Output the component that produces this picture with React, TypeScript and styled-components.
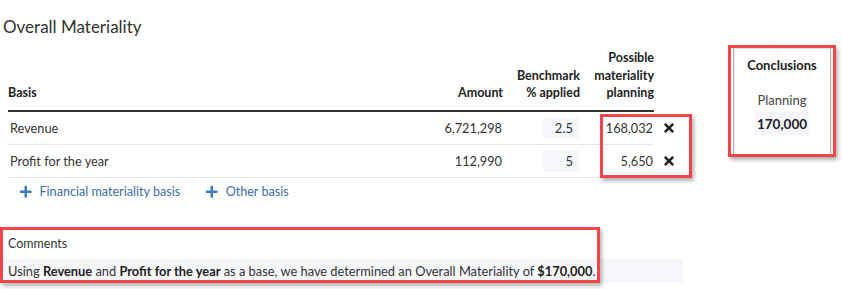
import styled, { createGlobalStyle } from 'styled-components';
import { FaPlus, FaTimes } from 'react-icons/fa';

type BasisRow = {
  id: string;
  name: string;
  amount: string;
  percent: string;
  possible: string;
};

const rows: BasisRow[] = [
  { id: 'revenue', name: 'Revenue', amount: '6,721,298', percent: '2.5', possible: '168,032' },
  { id: 'profit', name: 'Profit for the year', amount: '112,990', percent: '5', possible: '5,650' },
];

const GlobalStyle = createGlobalStyle`
  html, body {
    margin: 0;
    padding: 0;
    background: #ffffff;
  }

  body {
    font-family: Lato, 'Open Sans', 'Liberation Sans', sans-serif;
    color: #333333;
  }
`;

const App = () => {
  return (
    <>
      <GlobalStyle />
      <Page>
        <MainColumn>
          <Title>Overall Materiality</Title>

          <Table>
            <HeaderRow>
              <HeaderCell>Basis</HeaderCell>
              <HeaderCell $align="right">Amount</HeaderCell>
              <HeaderCell $align="right">
                Benchmark
                <br />% applied
              </HeaderCell>
              <HeaderCell $align="right">
                Possible
                <br />
                materiality
                <br />
                planning
              </HeaderCell>
            </HeaderRow>

            {rows.map((row) => (
              <RowWrapper key={row.id}>
                <BodyRow>
                  <Cell>{row.name}</Cell>
                  <Cell $align="right">{row.amount}</Cell>
                  <Cell $align="right">
                    <PercentInput>{row.percent}</PercentInput>
                  </Cell>
                  <Cell $align="right">{row.possible}</Cell>
                </BodyRow>
                <RemoveButton aria-label={`Remove ${row.name}`}>
                  <FaTimes />
                </RemoveButton>
              </RowWrapper>
            ))}
          </Table>

          <AddLinks>
            <AddLink>
              <FaPlus />
              Financial materiality basis
            </AddLink>
            <AddLink>
              <FaPlus />
              Other basis
            </AddLink>
          </AddLinks>

          <Comments>
            <CommentsLabel>Comments</CommentsLabel>
            <CommentField>
              Using <b>Revenue</b> and <b>Profit for the year</b> as a base, we have determined an
              Overall Materiality of <b>$170,000</b>.
            </CommentField>
          </Comments>
        </MainColumn>

        <ConclusionsPanel>
          <ConclusionsTitle>Conclusions</ConclusionsTitle>
          <PlanningLabel>Planning</PlanningLabel>
          <PlanningValue>170,000</PlanningValue>
        </ConclusionsPanel>

        <Highlight $left={600} $top={114} $width={92} $height={64} />
        <Highlight $left={728} $top={45} $width={108} $height={112} />
        <Highlight $left={0} $top={227} $width={600} $height={56} />
      </Page>
    </>
  );
};

export default App;

const Page = styled.div`
  position: relative;
  display: flex;
  align-items: flex-start;
  width: 842px;
  height: 289px;
`;

const MainColumn = styled.div`
  display: flex;
  flex-direction: column;
  width: 692px;
  flex-shrink: 0;
`;

const Title = styled.h1`
  margin: 16px 0 0 3px;
  font-size: 17px;
  line-height: 22px;
  font-weight: 400;
  color: #333333;
`;

const Table = styled.div`
  margin: 11px 0 0 8px;
  display: flex;
  flex-direction: column;
`;

const columns = '375px 120px 77px 74px';

const HeaderRow = styled.div`
  display: grid;
  grid-template-columns: ${columns};
  align-items: end;
  width: 646px;
  border-bottom: 2px solid #333333;
`;

const HeaderCell = styled.div<{ $align?: 'left' | 'right' }>`
  padding-bottom: 8px;
  font-size: 12.5px;
  line-height: 17.5px;
  font-weight: 700;
  color: #222222;
  text-align: ${({ $align }) => $align ?? 'left'};
`;

const RowWrapper = styled.div`
  display: flex;
  align-items: center;
`;

const BodyRow = styled.div`
  display: grid;
  grid-template-columns: ${columns};
  align-items: center;
  width: 646px;
  height: 32px;
  border-bottom: 1px solid #e6e6e6;
`;

const Cell = styled.div<{ $align?: 'left' | 'right' }>`
  display: flex;
  justify-content: ${({ $align }) => ($align === 'right' ? 'flex-end' : 'flex-start')};
  padding: 0 ${({ $align }) => ($align === 'right' ? '1px' : '0')} 0
    ${({ $align }) => ($align === 'right' ? '0' : '2px')};
  font-size: 12.75px;
  color: #333333;
`;

const PercentInput = styled.div`
  width: 36px;
  height: 22px;
  box-sizing: border-box;
  padding-right: 6px;
  display: flex;
  align-items: center;
  justify-content: flex-end;
  background: #f5f7fc;
  font-size: 13px;
`;

const RemoveButton = styled.button`
  display: flex;
  align-items: center;
  width: 38px;
  height: 20px;
  padding: 0 0 0 8px;
  border: none;
  background: transparent;
  color: #222222;
  font-size: 14px;
`;

const AddLinks = styled.div`
  display: flex;
  align-items: center;
  gap: 25px;
  height: 28px;
  padding-left: 19px;
`;

const AddLink = styled.a`
  display: flex;
  align-items: center;
  gap: 7px;
  font-size: 12.6px;
  color: #3b6da8;
  cursor: pointer;

  svg {
    color: #3b7bc4;
    font-size: 13.5px;
  }
`;

const Comments = styled.div`
  margin-top: 30px;
  display: flex;
  flex-direction: column;
`;

const CommentsLabel = styled.div`
  padding-left: 8px;
  font-size: 12.5px;
  line-height: 16px;
  color: #333333;
`;

const CommentField = styled.div`
  margin: 7px 0 0 2px;
  width: 681px;
  height: 24px;
  box-sizing: border-box;
  padding-left: 6px;
  display: flex;
  align-items: center;
  white-space: pre;
  background: #f6f7fb;
  font-size: 12.84px;
  color: #333333;

  b {
    font-weight: 700;
    color: #222222;
  }
`;

const ConclusionsPanel = styled.div`
  margin: 47px 0 0 41px;
  width: 98px;
  height: 109px;
  box-sizing: border-box;
  border: 1px solid #b8b8b8;
  box-shadow: inset 1px 1px 1px rgba(0, 0, 0, 0.12), 1px 1px 1px rgba(0, 0, 0, 0.08);
  display: flex;
  flex-direction: column;
  align-items: center;
`;

const ConclusionsTitle = styled.div`
  margin-top: 9px;
  font-size: 13px;
  font-weight: 700;
  color: #222222;
`;

const PlanningLabel = styled.div`
  margin-top: 19px;
  font-size: 13px;
  color: #444444;
`;

const PlanningValue = styled.div`
  margin-top: 4px;
  width: 54px;
  height: 23px;
  display: flex;
  align-items: center;
  justify-content: center;
  background: #f6f7fc;
  font-size: 13.5px;
  font-weight: 700;
  color: #222222;
`;

const Highlight = styled.div<{ $left: number; $top: number; $width: number; $height: number }>`
  position: absolute;
  left: ${({ $left }) => $left}px;
  top: ${({ $top }) => $top}px;
  width: ${({ $width }) => $width}px;
  height: ${({ $height }) => $height}px;
  box-sizing: border-box;
  border: 3px solid #f0454a;
  box-shadow: 2px 3px 4px rgba(0, 0, 0, 0.3);
  pointer-events: none;
`;
